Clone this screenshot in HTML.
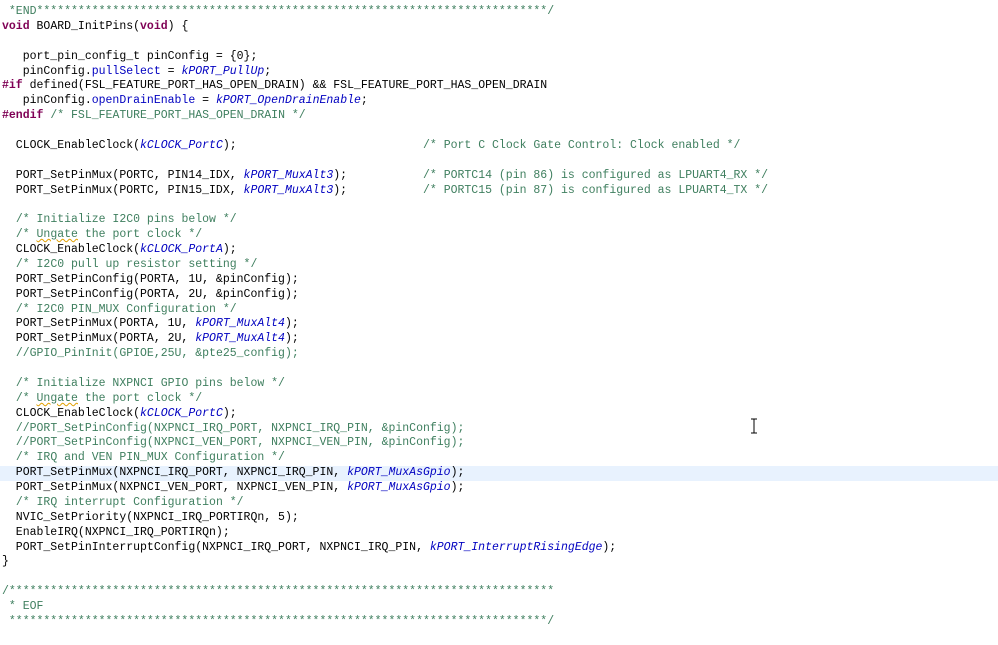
<!DOCTYPE html>
<html><head><meta charset="utf-8"><style>
html,body{margin:0;padding:0;background:#fff;width:998px;height:645px;overflow:hidden}
pre{margin:0;position:absolute;left:2px;top:5px;font-family:"Liberation Mono",monospace;font-size:11.5px;line-height:14.88px;color:#000;white-space:pre}
.c{color:#3f7f5f}.k{color:#7f0055;font-weight:bold}.f{color:#0000c0}.i{color:#0000c0;font-style:italic}
.u{text-decoration:underline wavy #e0a000;text-decoration-thickness:1px}
#hl{position:absolute;left:0;top:466px;width:998px;height:15px;background:#e8f2fe}
#cur{position:absolute;left:750px;top:418px;width:8px;height:16px}
</style></head><body>
<div id="hl"></div>
<pre><span class="c"> *END**************************************************************************/</span>
<span class="k">void</span> BOARD_InitPins(<span class="k">void</span>) {

   port_pin_config_t pinConfig = {0};
   pinConfig.<span class="f">pullSelect</span> = <span class="i">kPORT_PullUp</span>;
<span class="k">#if</span> defined(FSL_FEATURE_PORT_HAS_OPEN_DRAIN) &amp;&amp; FSL_FEATURE_PORT_HAS_OPEN_DRAIN
   pinConfig.<span class="f">openDrainEnable</span> = <span class="i">kPORT_OpenDrainEnable</span>;
<span class="k">#endif</span> <span class="c">/* FSL_FEATURE_PORT_HAS_OPEN_DRAIN */</span>

  CLOCK_EnableClock(<span class="i">kCLOCK_PortC</span>);                           <span class="c">/* Port C Clock Gate Control: Clock enabled */</span>

  PORT_SetPinMux(PORTC, PIN14_IDX, <span class="i">kPORT_MuxAlt3</span>);           <span class="c">/* PORTC14 (pin 86) is configured as LPUART4_RX */</span>
  PORT_SetPinMux(PORTC, PIN15_IDX, <span class="i">kPORT_MuxAlt3</span>);           <span class="c">/* PORTC15 (pin 87) is configured as LPUART4_TX */</span>

  <span class="c">/* Initialize I2C0 pins below */</span>
  <span class="c">/* <span class="u">Ungate</span> the port clock */</span>
  CLOCK_EnableClock(<span class="i">kCLOCK_PortA</span>);
  <span class="c">/* I2C0 pull up resistor setting */</span>
  PORT_SetPinConfig(PORTA, 1U, &amp;pinConfig);
  PORT_SetPinConfig(PORTA, 2U, &amp;pinConfig);
  <span class="c">/* I2C0 PIN_MUX Configuration */</span>
  PORT_SetPinMux(PORTA, 1U, <span class="i">kPORT_MuxAlt4</span>);
  PORT_SetPinMux(PORTA, 2U, <span class="i">kPORT_MuxAlt4</span>);
  <span class="c">//GPIO_PinInit(GPIOE,25U, &amp;pte25_config);</span>

  <span class="c">/* Initialize NXPNCI GPIO pins below */</span>
  <span class="c">/* <span class="u">Ungate</span> the port clock */</span>
  CLOCK_EnableClock(<span class="i">kCLOCK_PortC</span>);
  <span class="c">//PORT_SetPinConfig(NXPNCI_IRQ_PORT, NXPNCI_IRQ_PIN, &amp;pinConfig);</span>
  <span class="c">//PORT_SetPinConfig(NXPNCI_VEN_PORT, NXPNCI_VEN_PIN, &amp;pinConfig);</span>
  <span class="c">/* IRQ and VEN PIN_MUX Configuration */</span>
  PORT_SetPinMux(NXPNCI_IRQ_PORT, NXPNCI_IRQ_PIN, <span class="i">kPORT_MuxAsGpio</span>);
  PORT_SetPinMux(NXPNCI_VEN_PORT, NXPNCI_VEN_PIN, <span class="i">kPORT_MuxAsGpio</span>);
  <span class="c">/* IRQ interrupt Configuration */</span>
  NVIC_SetPriority(NXPNCI_IRQ_PORTIRQn, 5);
  EnableIRQ(NXPNCI_IRQ_PORTIRQn);
  PORT_SetPinInterruptConfig(NXPNCI_IRQ_PORT, NXPNCI_IRQ_PIN, <span class="i">kPORT_InterruptRisingEdge</span>);
}

<span class="c">/*******************************************************************************</span>
<span class="c"> * EOF</span>
<span class="c"> ******************************************************************************/</span></pre>
<svg id="cur" viewBox="0 0 8 16"><path d="M1 1h6M4 1v14M1 15h6" stroke="#000" stroke-width="1" fill="none"/></svg>
</body></html>
